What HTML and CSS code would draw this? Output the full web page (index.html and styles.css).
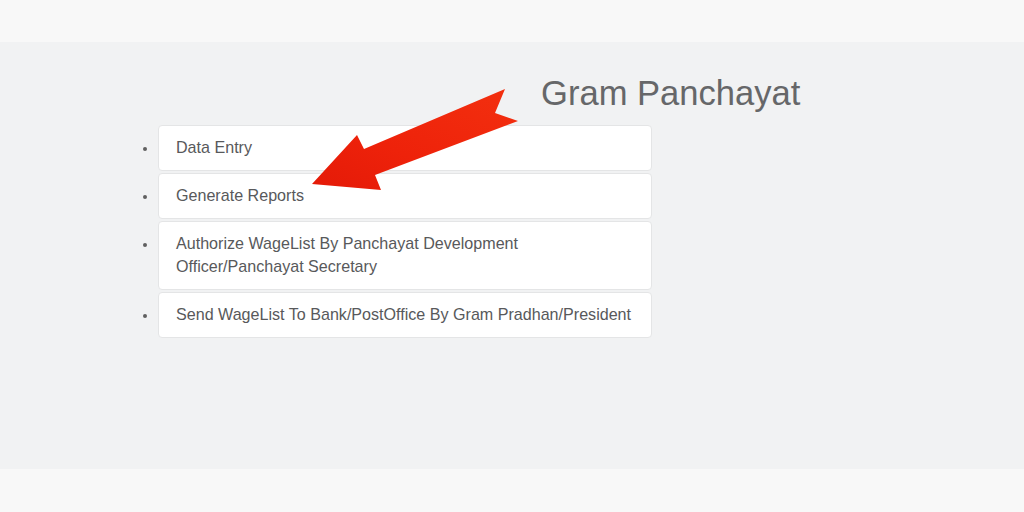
FILE: index.html
```html
<!DOCTYPE html>
<html lang="en">
<head>
<meta charset="utf-8">
<title>Gram Panchayat</title>
<link rel="stylesheet" href="styles.css">
</head>
<body>
<header class="topbar"></header>
<main class="main">
  <h1 class="title">Gram Panchayat</h1>
  <ul class="menu">
    <li class="menu-item">Data Entry</li>
    <li class="menu-item">Generate Reports</li>
    <li class="menu-item">Authorize WageList By Panchayat Development<br>Officer/Panchayat Secretary</li>
    <li class="menu-item">Send WageList To Bank/PostOffice By Gram Pradhan/President</li>
  </ul>
  <svg class="arrow" width="1024" height="427" viewBox="0 42 1024 427" aria-hidden="true">
    <defs>
      <linearGradient id="ag" x1="1" y1="0" x2="0" y2="1">
        <stop offset="0" stop-color="#f3300f"/>
        <stop offset="0.6" stop-color="#ee220a"/>
        <stop offset="1" stop-color="#e41a08"/>
      </linearGradient>
    </defs>
    <polygon fill="url(#ag)" points="312,184 357,135 364,149 505,89 495,113 518,121 375,175 381,190"/>
  </svg>
</main>
<footer class="bottombar"></footer>
</body>
</html>
```

FILE: styles.css
```css
html, body {
  margin: 0;
  padding: 0;
}

body {
  background: #f8f8f8;
  font-family: "Liberation Sans", Arial, sans-serif;
  width: 1024px;
  height: 512px;
  overflow: hidden;
}

.topbar {
  height: 42px;
  background: #f8f8f8;
}

.main {
  position: relative;
  height: 427px;
  box-sizing: border-box;
  background: #f1f2f3;
  padding-top: 31px;
}

.title {
  margin: 0 0 12px 541px;
  font-size: 34.6px;
  line-height: 40px;
  font-weight: normal;
  color: #666769;
}

.menu {
  margin: 0;
  padding: 0 0 0 158px;
  list-style: disc;
}

.menu-item {
  width: 494px;
  box-sizing: border-box;
  background: #ffffff;
  border: 1px solid #e4e5e6;
  border-radius: 4px;
  padding: 10px 12px 11px 17px;
  margin-bottom: 2px;
  font-size: 16.1px;
  line-height: 23px;
  color: #58595b;
}

.menu-item::marker {
  color: #606060;
  font-size: 13px;
}

.arrow {
  position: absolute;
  left: 0;
  top: 0;
}

.bottombar {
  height: 43px;
  background: #f8f8f8;
}
```
